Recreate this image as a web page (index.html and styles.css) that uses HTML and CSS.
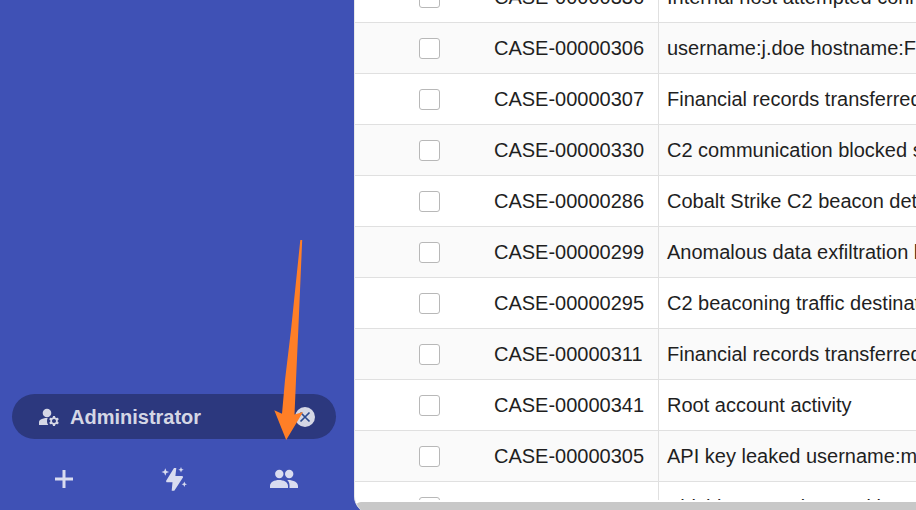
FILE: index.html
```
<!DOCTYPE html>
<html lang="en">
<head>
    <meta charset="UTF-8">
    <meta name="viewport" content="width=device-width, initial-scale=1.0">
    <title>Cases</title>
    <link rel="stylesheet" href="styles.css">
</head>
<body>
  <aside class="sidebar">
    <div class="role">
      <svg class="role-icon" viewBox="0 0 24 24" aria-hidden="true">
        <circle cx="10" cy="8" r="4.300"/>
        <path d="M10.67 13.02C10.45 13.01 10.23 13 10 13c-2.42 0-4.68.67-6.61 1.82-.88.52-1.39 1.5-1.39 2.53V20h9.26c-.79-1.13-1.26-2.51-1.26-4 0-1.07.25-2.07.67-2.98z"/>
        <path d="M20.75 16c0-.22-.03-.42-.06-.63l1.14-1.01-1-1.73-1.45.49c-.32-.27-.68-.48-1.08-.63L18 11h-2l-.3 1.49c-.4.15-.76.36-1.08.63l-1.45-.49-1 1.73 1.14 1.01c-.03.21-.06.41-.06.63s.03.42.06.63l-1.14 1.01 1 1.73 1.45-.49c.32.27.68.48 1.08.63L16 21h2l.3-1.49c.4-.15.76-.36 1.08-.63l1.45.49 1-1.73-1.14-1.01c.03-.21.06-.41.06-.63zM17 18c-1.1 0-2-.9-2-2s.9-2 2-2 2 .9 2 2-.9 2-2 2z"/>
      </svg>
      <span class="role-name">Administrator</span>
      <button class="role-clear" type="button" aria-label="Clear role">
        <svg viewBox="0 0 20 20" aria-hidden="true"><path d="M5.500 5.500l9 9M14.500 5.500l-9 9"/></svg>
      </button>
    </div>
    <nav class="actions">
      <button type="button" aria-label="Add">
        <svg viewBox="0 0 30 30" aria-hidden="true"><path d="M13.500 6h3v7.500h7.500v3h-7.500V24h-3v-7.500H6v-3h7.500z"/></svg>
      </button>
      <button type="button" aria-label="Quick actions">
        <svg viewBox="0 0 30 30" aria-hidden="true">
          <path d="M15 4h2.300l-.9 8h7.100l.6 1.200-8.800 13.500h-2.600l.8-8.500H7.500L7 17z"/>
          <path d="M6.300 4.200l1.100 2.700 2.700 1.100-2.700 1.100-1.100 2.700-1.100-2.700L2.500 8l2.700-1.100zM22 3l.8 1.900 1.900.8-1.900.8-.8 1.900-.8-1.900-1.900-.8 1.900-.8zM25.300 17.600l.8 1.900 1.900.8-1.900.8-.8 1.900-.8-1.900-1.900-.8 1.900-.8z"/>
        </svg>
      </button>
      <button type="button" aria-label="Roles">
        <svg viewBox="0 0 30 30" aria-hidden="true">
          <circle cx="10.300" cy="10" r="4.200"/>
          <circle cx="20.200" cy="10" r="4.200"/>
          <path d="M1 24v-2C1 18 5.500 16 10 16s9 2 9 6v2zM18.200 16c5.800-.2 10.800 2 10.800 6v2h-8.500v-2.500c0-2.300-.9-4.200-2.300-5.500z"/>
        </svg>
      </button>
    </nav>
  </aside>

  <main class="content">
    <div class="table-wrap">
      <table class="cases">
        <colgroup><col class="col-check"><col class="col-id"><col></colgroup>
        <tbody>
          <tr><td><input type="checkbox" aria-label="CASE-00000336"></td><td>CASE-00000336</td><td>Internal host attempted connection</td></tr>
          <tr><td><input type="checkbox" aria-label="CASE-00000306"></td><td>CASE-00000306</td><td>username:j.doe hostname:FIN</td></tr>
          <tr><td><input type="checkbox" aria-label="CASE-00000307"></td><td>CASE-00000307</td><td>Financial records transferred</td></tr>
          <tr><td><input type="checkbox" aria-label="CASE-00000330"></td><td>CASE-00000330</td><td>C2 communication blocked source</td></tr>
          <tr><td><input type="checkbox" aria-label="CASE-00000286"></td><td>CASE-00000286</td><td>Cobalt Strike C2 beacon detected</td></tr>
          <tr><td><input type="checkbox" aria-label="CASE-00000299"></td><td>CASE-00000299</td><td>Anomalous data exfiltration hostname</td></tr>
          <tr><td><input type="checkbox" aria-label="CASE-00000295"></td><td>CASE-00000295</td><td>C2 beaconing traffic destination</td></tr>
          <tr><td><input type="checkbox" aria-label="CASE-00000311"></td><td>CASE-00000311</td><td>Financial records transferred</td></tr>
          <tr><td><input type="checkbox" aria-label="CASE-00000341"></td><td>CASE-00000341</td><td>Root account activity</td></tr>
          <tr><td><input type="checkbox" aria-label="CASE-00000305"></td><td>CASE-00000305</td><td>API key leaked username:m.</td></tr>
          <tr><td><input type="checkbox" aria-label="CASE-00000310"></td><td>CASE-00000310</td><td>Phishing URL detected in</td></tr>
        </tbody>
      </table>
    </div>
    <div class="scrollbar"></div>
  </main>

  <svg class="arrow" viewBox="0 0 32 202" aria-hidden="true">
    <path d="M26.300 2h1.900L24.300 92L22 142L20.500 176.500L29 174L12.200 202L.3 172.300L8 175.800L11 142L17 92z"/>
  </svg>
</body>
</html>
```

FILE: styles.css
```
* {
  box-sizing: border-box;
}

body {
  display: flex;
  height: 100vh;
  margin: 0;
  overflow: hidden;
  background: #3f51b5;
  color: #1f1f1f;
  font-family: "Liberation Sans", Arial, sans-serif;
  font-size: 20px;
}

button {
  padding: 0;
  border: none;
  background: none;
  cursor: pointer;
}

svg {
  display: block;
}

/* Sidebar */
.sidebar {
  display: flex;
  flex: 0 0 354px;
  flex-direction: column;
  justify-content: flex-end;
  gap: 24px;
  padding: 0 15px 15px 9px;
}

.role {
  display: flex;
  align-items: center;
  height: 45px;
  margin: 0 3px;
  padding: 0 21px 0 25px;
  border-radius: 23px;
  background: #2c387e;
  color: #d5d7e5;
  font-weight: bold;
  line-height: 24px;
}

.role-icon {
  width: 24px;
  height: 24px;
  margin-right: 9px;
  fill: currentColor;
}

.role-name {
  flex: 1;
}

.role-clear {
  width: 20px;
  height: 20px;
  border-radius: 50%;
  background: #d5d7e5;
}

.role-clear svg {
  fill: none;
  stroke: #2c4a8e;
  stroke-width: 1.7;
}

.actions {
  display: grid;
  grid-template-columns: repeat(3, 1fr);
  justify-items: center;
}

.actions button {
  width: 30px;
  height: 32px;
}

.actions svg {
  width: 30px;
  height: 30px;
  fill: #d9dcf0;
}

/* Cases */
.content {
  display: flex;
  flex: 1;
  flex-direction: column;
  min-width: 0;
  height: calc(100vh + 4px);
  overflow: hidden;
  border-left: 1px solid #e8e8e8;
  border-bottom-left-radius: 18px;
  background: #fff;
}

.table-wrap {
  flex: 1;
  min-height: 0;
  margin-bottom: 2px;
  overflow: hidden;
}

/* list is scrolled part way into its first row */
.cases {
  width: 100%;
  margin-top: -28px;
  border-spacing: 0;
  table-layout: fixed;
}

.col-check {
  width: 131px;
}

.col-id {
  width: 173px;
}

.cases td {
  height: 51px;
  padding: 0 8px;
  border-bottom: 1px solid #e0e0e0;
  white-space: nowrap;
}

.cases td:first-child {
  padding-left: 64px;
}

.cases td:nth-child(2) {
  border-right: 1px solid #e0e0e0;
}

.cases tr:nth-child(even) {
  background: #fafafa;
}

.cases input {
  display: block;
  width: 21px;
  height: 21px;
  margin: 0;
  appearance: none;
  border: 1px solid #b8b8b8;
  border-radius: 3px;
  background: #fff;
}

.scrollbar {
  flex: 0 0 12px;
  border-radius: 6px 0 0 6px;
  background: #c8c8c8;
}

/* Pointer drawn over the sidebar */
.arrow {
  position: absolute;
  bottom: 70px;
  left: 274px;
  width: 32px;
  height: 202px;
  fill: #ff7f27;
}
```
